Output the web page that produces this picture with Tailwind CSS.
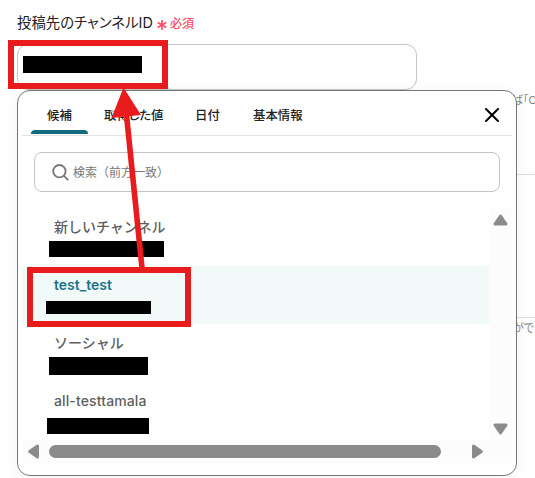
<!DOCTYPE html>
<html lang="ja">
<head>
<meta charset="utf-8">
<title>投稿先のチャンネルID</title>
<script src="https://cdn.jsdelivr.net/npm/@tailwindcss/browser@4"></script>
</head>
<body class="relative h-[478px] w-[535px] overflow-hidden bg-white font-['Inter','Noto_Sans_CJK_JP',sans-serif] text-[#222]">
<main class="pl-[17px] pt-[12px]">
  <div class="flex h-[22px] items-center whitespace-nowrap">
    <label class="w-[140px] text-[14.4px] leading-[22px] [font-feature-settings:'palt']">投稿先のチャンネルID</label>
    <svg class="mt-[4px] h-[10px] w-[10px]" viewBox="0 0 10 10" fill="none" stroke="#ff4d63" stroke-width="1.7"><path d="M5 0v10M.7 2.5l8.6 5M9.3 2.5l-8.6 5"/></svg>
    <span class="ml-[3px] mt-[2px] text-[12px] font-medium text-[#ff4d63]">必須</span>
  </div>
  <div class="mt-[10px] flex h-[46px] w-[400px] rounded-[11px] border border-[#c4c4c4] pl-[5px] pt-[11px]">
    <div class="h-[17px] w-[119px] bg-black"></div>
  </div>
</main>

<aside class="absolute left-[505px] top-[90px] w-[30px] overflow-hidden whitespace-nowrap text-[11px] text-[#858585]">
  <div class="flex h-[85px] border-b border-[#dcdce3] pl-[7px] pt-[3px] leading-[14px] [font-feature-settings:'palt']">ば「C</div>
  <div class="h-[143px] border-b border-[#dcdce3]"></div>
  <div class="pl-[8px] pt-[3px] leading-[14px] [font-feature-settings:'palt']">ができま</div>
</aside>

<section class="absolute left-[17px] top-[90px] flex h-[386px] w-[500px] flex-col rounded-[13px] border border-[#777] bg-white px-[4px] shadow-[0_2px_16px_rgba(0,0,0,0.05)]">
  <header class="flex h-[45px] shrink-0 border-b border-[#e2e2e2] pl-[9px] text-[12.4px] font-medium leading-[18px]">
    <div class="relative h-[43px] w-[57px] pl-[16px] pt-[16px]">候補<span class="absolute bottom-0 left-0 h-[4px] w-[57px] rounded-t-[4px] bg-[#126b80]"></span></div>
    <div class="w-[91px] whitespace-nowrap pl-[16px] pt-[16px] [font-feature-settings:'palt']">取得した値</div>
    <div class="w-[57px] pl-[16px] pt-[16px]">日付</div>
    <div class="w-[83px] whitespace-nowrap pl-[17px] pt-[16px]">基本情報</div>
    <svg class="ml-[166px] mt-[17px] h-[14px] w-[14px]" viewBox="0 0 14 14" fill="none" stroke="#000" stroke-width="2" stroke-linecap="round"><path d="M1 1l12 12M13 1L1 13"/></svg>
  </header>
  <div class="ml-[12px] mt-[16px] flex h-[40px] w-[466px] shrink-0 items-center rounded-[8px] border border-[#c4c4c4] pl-[17px]">
    <svg class="h-[17px] w-[17px]" viewBox="0 0 17 17" fill="none" stroke="#777" stroke-width="1.8"><circle cx="7.4" cy="7.2" r="6.2"/><path d="M11.7 11.6l4.5 4.5"/></svg>
    <span class="ml-[4px] mt-[2px] text-[12px] text-[#777]">検索（前方一致）</span>
  </div>
  <div class="mt-[16px] flex h-[232px] shrink-0 text-[14px] font-semibold leading-[20px] text-[#5f5f5f]">
    <ul class="w-[467px]">
      <li class="h-[58px] pl-[32px] pt-[9px]"><p class="font-medium">新しいチャンネル</p><div class="-ml-[5px] mt-[4px] h-[16px] w-[115px] bg-black"></div></li>
      <li class="h-[58px] bg-[#f1faf9] pl-[32px] pt-[9px] text-[#1c7489]"><p>test_test</p><div class="-ml-[8px] mt-[6px] h-[13px] w-[105px] bg-black"></div></li>
      <li class="h-[58px] pl-[32px] pt-[9px]"><p class="font-medium">ソーシャル</p><div class="-ml-[5px] mt-[4px] h-[18px] w-[99px] bg-black"></div></li>
      <li class="h-[58px] pl-[32px] pt-[9px]"><p class="font-medium tracking-[0.12px]">all-testtamala</p><div class="-ml-[7px] mt-[7px] h-[16px] w-[102px] bg-black"></div></li>
    </ul>
    <div class="flex w-[23px] flex-col items-center justify-between bg-[#fcfcfc] pb-[5px] pt-[6px]">
      <svg class="h-[12px] w-[15px]" viewBox="0 0 15 12" fill="#8b8b8b" stroke="#8b8b8b" stroke-width="3" stroke-linejoin="round"><path d="M7.5 2L13 10H2z"/></svg>
      <svg class="h-[12px] w-[15px]" viewBox="0 0 15 12" fill="#8b8b8b" stroke="#8b8b8b" stroke-width="3" stroke-linejoin="round"><path d="M2 2h11L7.5 10z"/></svg>
    </div>
  </div>
  <div class="flex h-[23px] shrink-0 items-center bg-[#fcfcfc] pl-[6px]">
    <svg class="h-[15px] w-[11px]" viewBox="0 0 11 15" fill="#8b8b8b" stroke="#8b8b8b" stroke-width="3" stroke-linejoin="round"><path d="M1.7 7.5L9.5 2v11z"/></svg>
    <div class="ml-[10px] h-[13px] w-[392px] rounded-full bg-[#8b8b8b]"></div>
    <svg class="ml-[31px] h-[15px] w-[11px]" viewBox="0 0 11 15" fill="#8b8b8b" stroke="#8b8b8b" stroke-width="3" stroke-linejoin="round"><path d="M9.3 7.5L1.5 2v11z"/></svg>
  </div>
</section>

<svg class="absolute left-0 top-0" width="535" height="478" viewBox="0 0 535 478">
  <g fill="none" stroke="#e81c1c" stroke-width="6"><path d="M11 43h154v43H11zM30 270h158v54H30z"/><path d="M126 110l16 158" stroke-width="5.6"/></g>
  <path d="M123.5 87.5L111.5 118l29.5-3z" fill="#e81c1c"/>
</svg>
</body>
</html>
